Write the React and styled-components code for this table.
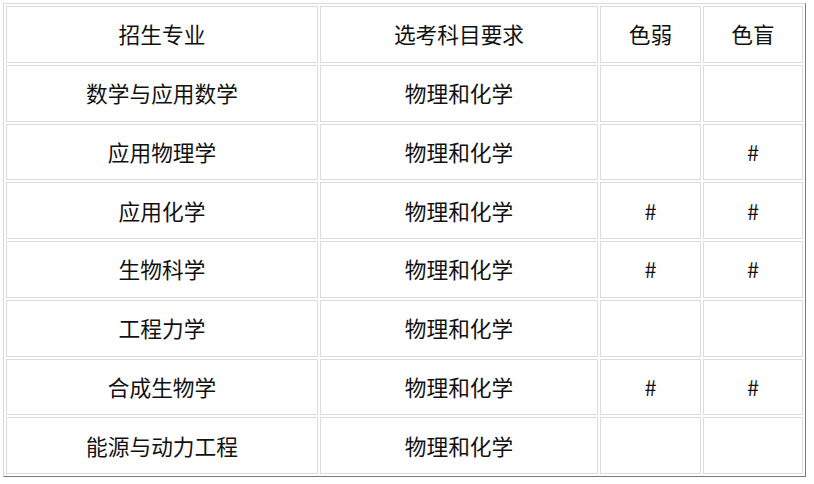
import React from "react";
import styled, { createGlobalStyle } from "styled-components";

const GlobalStyle = createGlobalStyle`
  html, body {
    margin: 0;
    padding: 0;
    background: #ffffff;
  }
  body {
    font-family: "Noto Sans CJK SC", "Noto Sans", sans-serif;
    color: #111111;
  }
`;

const Page = styled.div`
  padding: 3px;
`;

const Table = styled.table`
  width: 803px;
  border-collapse: separate;
  border-spacing: 2px;
  border-style: solid;
  border-width: 1px;
  border-color: #d8d8d8 #7a7a7a #7a7a7a #d8d8d8;
  table-layout: fixed;
`;

const Row = styled.tr`
  height: 56.75px;
`;

const Cell = styled.td`
  box-sizing: border-box;
  width: ${(p) => p.$w}px;
  border: 1px solid #dcdcdc;
  padding: 0;
  text-align: center;
  vertical-align: middle;
  font-size: 21.7px;
  line-height: 1.2;
  color: #111111;
`;

const widths = [312, 278, 101, 100];

const header = ["招生专业", "选考科目要求", "色弱", "色盲"];

const rows = [
  ["数学与应用数学", "物理和化学", "", ""],
  ["应用物理学", "物理和化学", "", "#"],
  ["应用化学", "物理和化学", "#", "#"],
  ["生物科学", "物理和化学", "#", "#"],
  ["工程力学", "物理和化学", "", ""],
  ["合成生物学", "物理和化学", "#", "#"],
  ["能源与动力工程", "物理和化学", "", ""],
];

const App = () => {
  return (
    <Page>
      <GlobalStyle />
      <Table>
        <tbody>
          <Row>
            {header.map((h, i) => (
              <Cell key={i} $w={widths[i]}>
                {h}
              </Cell>
            ))}
          </Row>
          {rows.map((r, ri) => (
            <Row key={ri}>
              {r.map((c, ci) => (
                <Cell key={ci} $w={widths[ci]}>
                  {c}
                </Cell>
              ))}
            </Row>
          ))}
        </tbody>
      </Table>
    </Page>
  );
};

export default App;
